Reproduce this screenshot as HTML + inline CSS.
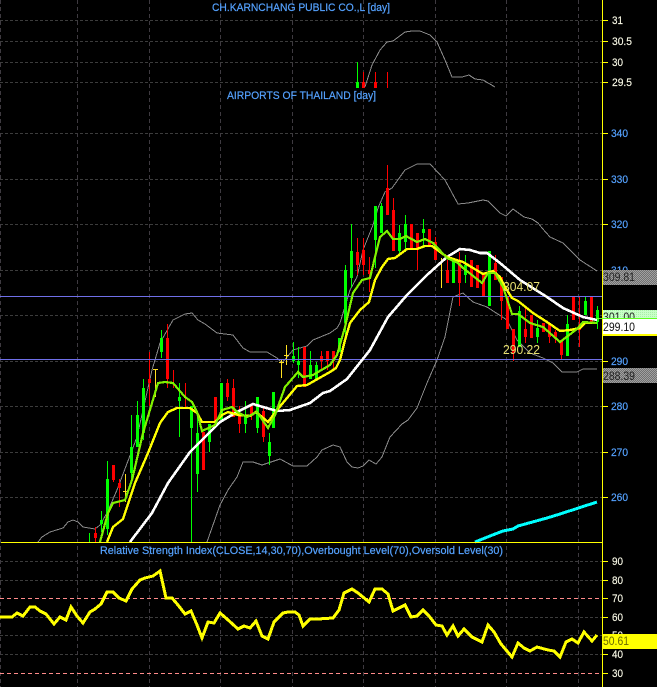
<!DOCTYPE html>
<html>
<head>
<meta charset="utf-8">
<style>
html,body{margin:0;padding:0;background:#000;width:657px;height:687px;overflow:hidden}
svg{display:block}
text{font-family:"Liberation Sans",sans-serif;font-size:11px}
.b{fill:#55a2ff;stroke:#55a2ff;stroke-width:.2}
.c{fill:#fbfbe8;stroke:#fbfbe8;stroke-width:.15}
.d{fill:#222}
</style>
</head>
<body>
<svg width="657" height="687" viewBox="0 0 657 687" xmlns="http://www.w3.org/2000/svg">
<defs>
<pattern id="dg" width="2" height="2" patternUnits="userSpaceOnUse"><rect width="2" height="2" fill="#707070"/><rect width="1" height="1" fill="#a0a0a0"/><rect x="1" y="1" width="1" height="1" fill="#a0a0a0"/></pattern>
<pattern id="dl" width="2" height="2" patternUnits="userSpaceOnUse"><rect width="2" height="2" fill="#c8ffc8"/><rect width="1" height="1" fill="#a8f0a8"/></pattern>
</defs>
<rect width="657" height="687" fill="#000"/>
<g shape-rendering="crispEdges" fill="none">
<path stroke="#3c3c3c" stroke-dasharray="3 2" d="M0 20.5H602M0 41.5H602M0 62.5H602M0 82.5H602M0 133.5H602M0 179.5H602M0 224.5H602M0 270.5H602M0 315.5H602M0 361.5H602M0 406.5H602M0 452.5H602M0 497.5H602M0 561.5H602M0 580.5H602M0 617.5H602M0 635.5H602M0 654.5H602"/>
<path stroke="#3e3a40" stroke-dasharray="4 3" d="M0.5 0V687M77.5 0V687M149.5 0V687M220.5 0V687M292.5 0V687M363.5 0V687M435.5 0V687M506.5 0V687M578.5 0V687"/>
<path stroke="#ff8a8a" stroke-dasharray="4 3" d="M0 598.5H602M0 673.5H602"/>
<!-- small overlay chart -->
<path fill="#00ff00" d="M357 62h1v26h-1zM356 82h3v6h-3z"/>
<path fill="#ff0000" d="M363 72h1v16h-1zM375 72h1v16h-1zM387 72h1v16h-1zM362 82h3v6h-3zM374 82h3v6h-3z"/>
<polyline stroke="#8a8a8a" points="365,87 372,65 380,50 387,42 393,41 405,32 412,31 420,31 430,35 437,42 445,60 452,77 462,77 469,75 475,79 483,80 495,87"/>
<!-- bollinger bands -->
<polyline stroke="#8a8a8a" points="38,542 42,537 50,532 63,528 68,522 73,520 78,522 83,527 95,529 100,525 107,513 117,490 137,437 152,370 160,343 173,320 185,314 192,313 198,320 205,324 217,333 233,335 243,348 250,352 267,352 277,358 282,363 293,350 307,346 313,340 330,333 337,328 340,323 350,290 357,277 363,250 373,225 378,208 385,192 392,188 405,170 417,164 430,164 445,180 458,204 468,203 483,200 488,201 500,213 506,216 513,209 524,217 532,219 538,223 542,228 550,237 563,243 580,260 597,271"/>
<polyline stroke="#8a8a8a" points="207,542 220,505 228,490 237,477 243,462 253,462 262,465 280,459 293,466 307,466 317,457 322,450 333,445 340,447 347,462 352,467 358,468 363,466 369,460 376,464 382,457 390,437 402,424 408,420 417,408 427,383 437,360 445,337 453,297 458,295 463,293 473,302 487,307 507,320 517,340 530,353 543,358 553,363 562,372 577,372 583,369 597,369"/>
<!-- green wicks -->
<path fill="#00ff00" d="M89 533h1v9h-1zM101 511h1v21h-1zM107 461h1v74h-1zM131 415h1v65h-1zM137 401h1v46h-1zM143 379h1v61h-1zM161 330h1v28h-1zM179 383h1v54h-1zM191 406h1v136h-1zM197 415h1v77h-1zM209 424h1v28h-1zM245 401h1v32h-1zM257 397h1v36h-1zM269 433h1v32h-1zM293 342h1v21h-1zM298 347h1v31h-1zM310 351h1v28h-1zM316 362h1v17h-1zM345 265h1v75h-1zM351 224h1v64h-1zM375 206h1v62h-1zM381 203h1v30h-1zM399 225h1v30h-1zM405 215h1v37h-1zM423 219h1v29h-1zM465 255h1v28h-1zM519 306h1v41h-1zM537 320h1v23h-1zM567 315h1v41h-1zM585 297h1v18h-1zM597 306h1v23h-1z"/>
<!-- green bodies -->
<path fill="#00ff00" d="M100 520h3v4h-3zM106 479h3v50h-3zM130 447h3v26h-3zM136 415h3v32h-3zM142 388h3v45h-3zM160 338h3v14h-3zM178 397h3v4h-3zM190 406h3v22h-3zM196 433h3v41h-3zM208 424h3v18h-3zM220 383h3v37h-3zM244 415h3v9h-3zM256 397h3v31h-3zM268 442h3v14h-3zM272 392h3v36h-3zM292 356h3v5h-3zM297 361h3v4h-3zM309 365h3v14h-3zM315 365h3v14h-3zM338 338h3v14h-3zM344 270h3v53h-3zM350 251h3v27h-3zM374 206h3v34h-3zM380 206h3v27h-3zM398 233h3v18h-3zM404 224h3v18h-3zM422 229h3v4h-3zM452 260h3v23h-3zM464 265h3v10h-3zM488 251h3v55h-3zM518 311h3v36h-3zM536 328h3v9h-3zM566 324h3v32h-3zM584 301h3v14h-3zM596 310h3v12h-3z"/>
<!-- red wicks -->
<path fill="#ff0000" d="M95 527h1v15h-1zM113 465h1v17h-1zM119 479h1v28h-1zM149 352h1v54h-1zM167 324h1v64h-1zM173 370h1v18h-1zM185 383h1v24h-1zM227 379h1v22h-1zM233 379h1v38h-1zM239 406h1v27h-1zM251 406h1v14h-1zM263 406h1v36h-1zM321 351h1v19h-1zM327 351h1v19h-1zM333 351h1v19h-1zM357 238h1v37h-1zM363 238h1v37h-1zM369 257h1v35h-1zM387 165h1v50h-1zM393 198h1v53h-1zM417 233h1v37h-1zM435 237h1v23h-1zM447 260h1v23h-1zM459 252h1v54h-1zM495 255h1v25h-1zM501 277h1v43h-1zM513 329h1v32h-1zM525 307h1v36h-1zM549 324h1v19h-1zM555 330h1v13h-1zM561 340h1v20h-1zM579 297h1v50h-1z"/>
<!-- red bodies -->
<path fill="#ff0000" d="M94 533h3v5h-3zM112 465h3v15h-3zM118 483h3v5h-3zM148 379h3v4h-3zM166 338h3v41h-3zM202 432h3v38h-3zM214 397h3v25h-3zM226 383h3v14h-3zM232 388h3v29h-3zM238 415h3v9h-3zM250 406h3v9h-3zM262 411h3v26h-3zM303 347h3v40h-3zM320 356h3v5h-3zM326 351h3v10h-3zM332 351h3v10h-3zM356 252h3v13h-3zM362 250h3v15h-3zM368 270h3v4h-3zM386 188h3v27h-3zM392 210h3v41h-3zM410 224h3v26h-3zM416 233h3v15h-3zM428 229h3v18h-3zM434 242h3v18h-3zM446 270h3v13h-3zM458 260h3v23h-3zM470 260h3v27h-3zM476 265h3v23h-3zM482 273h3v23h-3zM494 263h3v17h-3zM500 277h3v24h-3zM506 297h3v32h-3zM512 329h3v24h-3zM524 329h3v8h-3zM530 315h3v23h-3zM542 323h3v9h-3zM548 324h3v13h-3zM554 332h3v5h-3zM560 340h3v15h-3zM572 297h3v23h-3zM578 325h3v5h-3zM590 297h3v25h-3z"/>
<!-- doji -->
<path fill="#ffe020" d="M125 474h1v28h-1zM123 491h5v1h-5zM155 369h1v28h-1zM153 369h5v1h-5zM281 360h1v18h-1zM279 362h5v1h-5zM286 345h1v20h-1zM284 355h5v1h-5zM441 258h1v30h-1z"/>
<!-- level lines -->
<path stroke="#6f6fe8" d="M0 296.5H602M0 359.5H602"/>
<!-- cyan -->
<polyline stroke="#00ffff" stroke-width="3" points="475,542 490,536 503,531 513,529 518,526 547,518 560,514 597,502"/>
<!-- white MA -->
<polyline stroke="#ffffff" stroke-width="2.6" points="130,542 152,513 168,483 190,452 207,435 220,422 237,412 253,404 263,407 277,411 290,410 310,403 323,393 330,391 347,379 370,350 388,317 407,295 427,275 447,257 460,249 470,250 480,253 487,253 500,263 520,280 547,297 563,308 583,317 597,320"/>
<!-- yellow EMA -->
<polyline stroke="#ffff00" stroke-width="2.4" points="107,542 113,527 123,519 135,483 148,453 160,423 168,412 177,408 190,408 197,413 202,422 215,422 222,415 228,412 238,415 250,416 256,412 268,422 277,410 287,398 297,386 307,385 330,372 336,368 340,360 345,340 350,323 360,310 369,302 375,280 382,267 388,259 395,258 407,249 417,249 425,246 432,246 447,257 463,262 473,268 483,274 493,271 500,277 505,287 512,298 518,301 533,313 547,322 560,331 570,330 580,328 585,323 597,323"/>
<!-- green EMA -->
<polyline stroke="#80f000" stroke-width="2.2" points="100,542 108,513 113,503 125,500 132,480 143,433 158,383 165,382 173,383 185,397 192,402 197,412 202,431 215,425 222,410 232,407 237,412 247,417 257,412 268,428 275,415 285,387 298,372 303,377 313,375 330,365 337,355 345,327 353,293 362,280 370,278 375,257 380,237 387,231 393,239 400,239 406,236 417,242 425,239 433,243 447,258 458,263 463,268 482,283 488,273 495,273 503,287 512,314 518,314 530,323 543,327 560,342 577,329 583,322 597,323"/>
<!-- RSI -->
<polyline stroke="#ffff00" stroke-width="3" points="0,617 12,617 17,613 23,616 30,607 35,607 40,611 46,614 54,624 60,617 66,620 71,607 77,616 83,623 90,612 95,609 101,604 107,592 113,592 119,598 126,601 132,589 140,580 145,578 153,576 160,571 166,598 172,598 178,605 185,614 191,611 197,625 202,638 208,622 214,623 220,613 227,619 238,629 244,626 250,628 256,621 262,636 268,639 274,622 283,613 288,612 295,612 299,615 303,626 310,619 318,619 333,618 339,610 344,593 352,589 358,593 369,602 375,589 382,589 388,594 393,611 405,605 411,617 417,616 423,610 429,616 436,625 442,626 447,635 453,626 458,636 464,629 472,637 482,642 488,625 494,632 501,644 512,657 518,643 524,648 530,651 537,647 548,650 554,651 560,657 566,642 572,639 578,643 584,632 592,641 597,635"/>
<!-- axis -->
<path stroke="#ffff00" d="M1 542.5H602M602.5 0V687M603 20.5H608M603 41.5H608M603 62.5H608M603 82.5H608M603 133.5H608M603 179.5H608M603 224.5H608M603 361.5H608M603 406.5H608M603 452.5H608M603 497.5H608M603 561.5H608M603 580.5H608M603 598.5H608M603 617.5H608M603 654.5H608M603 673.5H608"/>
</g>
<text x="212" y="11" class="b" textLength="178" lengthAdjust="spacingAndGlyphs">CH.KARNCHANG PUBLIC CO.,L [day]</text>
<text x="227" y="99" class="b" textLength="149" lengthAdjust="spacingAndGlyphs">AIRPORTS OF THAILAND [day]</text>
<text x="100" y="554" class="b" textLength="403" lengthAdjust="spacingAndGlyphs">Relative Strength Index(CLOSE,14,30,70),Overbought Level(70),Oversold Level(30)</text>
<text x="503" y="291" fill="#e8e070" textLength="37" lengthAdjust="spacingAndGlyphs" style="font-size:13px">304.07</text>
<text x="503" y="354" fill="#e8e070" textLength="37" lengthAdjust="spacingAndGlyphs" style="font-size:13px">290.22</text>
<text x="612" y="24" class="c" textLength="11" lengthAdjust="spacingAndGlyphs">31</text>
<text x="612" y="45" class="c" textLength="20" lengthAdjust="spacingAndGlyphs">30.5</text>
<text x="612" y="66" class="c" textLength="11" lengthAdjust="spacingAndGlyphs">30</text>
<text x="612" y="86" class="c" textLength="20" lengthAdjust="spacingAndGlyphs">29.5</text>
<text x="611" y="137" class="b" textLength="17" lengthAdjust="spacingAndGlyphs">340</text>
<text x="611" y="183" class="b" textLength="17" lengthAdjust="spacingAndGlyphs">330</text>
<text x="611" y="228" class="b" textLength="17" lengthAdjust="spacingAndGlyphs">320</text>
<text x="611" y="274" class="b" textLength="17" lengthAdjust="spacingAndGlyphs">310</text>
<text x="611" y="365" class="b" textLength="17" lengthAdjust="spacingAndGlyphs">290</text>
<text x="611" y="410" class="b" textLength="17" lengthAdjust="spacingAndGlyphs">280</text>
<text x="611" y="456" class="b" textLength="17" lengthAdjust="spacingAndGlyphs">270</text>
<text x="611" y="501" class="b" textLength="17" lengthAdjust="spacingAndGlyphs">260</text>
<text x="612" y="565" class="c" textLength="11" lengthAdjust="spacingAndGlyphs">90</text>
<text x="612" y="584" class="c" textLength="11" lengthAdjust="spacingAndGlyphs">80</text>
<text x="612" y="602" class="c" textLength="11" lengthAdjust="spacingAndGlyphs">70</text>
<text x="612" y="621" class="c" textLength="11" lengthAdjust="spacingAndGlyphs">60</text>
<text x="612" y="639" class="c" textLength="11" lengthAdjust="spacingAndGlyphs">50</text>
<text x="612" y="658" class="c" textLength="11" lengthAdjust="spacingAndGlyphs">40</text>
<text x="612" y="677" class="c" textLength="11" lengthAdjust="spacingAndGlyphs">30</text>
<g shape-rendering="crispEdges">
<rect x="603" y="270" width="54" height="15" fill="url(#dg)"/>
<rect x="603" y="368" width="54" height="15" fill="url(#dg)"/>
<rect x="603" y="310" width="54" height="8" fill="url(#dl)"/>
<rect x="603" y="634" width="54" height="15" fill="#ffff00"/>
</g>
<text x="603" y="281" class="d" textLength="32" lengthAdjust="spacingAndGlyphs" style="font-size:12px">309.81</text>
<text x="603" y="380" class="d" textLength="32" lengthAdjust="spacingAndGlyphs" style="font-size:12px">288.39</text>
<text x="603" y="321" class="d" textLength="32" lengthAdjust="spacingAndGlyphs" style="font-size:12px">301.00</text>
<text x="603" y="645" fill="#6a6a00" textLength="26" lengthAdjust="spacingAndGlyphs" style="font-size:12px">50.61</text>
<g shape-rendering="crispEdges">
<rect x="596" y="318" width="61" height="1" fill="#60ff20"/>
<rect x="603" y="319" width="54" height="15" fill="#fff"/>
<rect x="603" y="334" width="54" height="2" fill="#ffff00"/>
</g>
<text x="603" y="331" fill="#111" textLength="32" lengthAdjust="spacingAndGlyphs" style="font-size:12px">299.10</text>
</svg>
</body>
</html>
